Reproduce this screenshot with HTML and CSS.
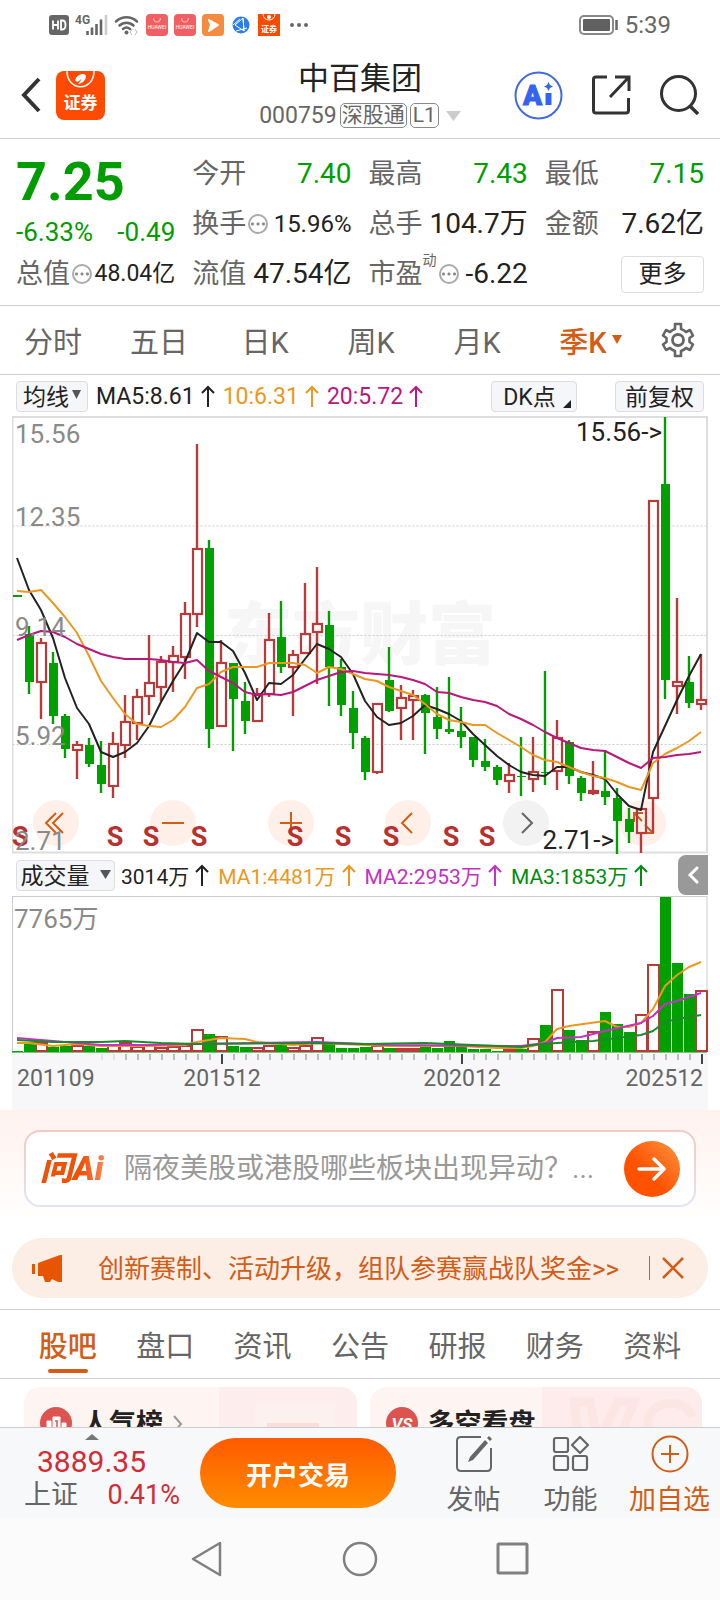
FILE: index.html
```html
<!DOCTYPE html>
<html lang="zh-CN">
<head>
<meta charset="utf-8">
<meta name="viewport" content="width=device-width, initial-scale=1">
<title>中百集团 000759</title>
<link rel="stylesheet" href="styles.css">
</head>
<body>
<div class="app">
  <div class="status">
    <div class="status-left">
      <svg width="20" height="20" viewBox="0 0 20 20"><rect width="20" height="20" rx="3" fill="#666"/><path d="M4 5.500v9M9 5.500v9M4 10h5M12 5.500v9h1.500c2 0 3-1.500 3-4.500s-1-4.500-3-4.500z" fill="none" stroke="#fff" stroke-width="1.800"/></svg>
      <span class="net">4G</span>
      <svg class="signal" width="22" height="20" viewBox="0 0 22 20"><path d="M1.500 16v4M6 12.500V20M10.500 9v11M15 4.500V20" stroke="#666" stroke-width="2.600"/><path d="M20 0v20" stroke="#ccc" stroke-width="2.600"/></svg>
      <svg width="26" height="20" viewBox="0 0 26 20"><g fill="none" stroke="#666" stroke-width="2.500" stroke-linecap="round"><path d="M2 6.500a15 15 0 0 1 21 0M5.500 10.500a10 10 0 0 1 14 0M9 14a5.500 5.500 0 0 1 7 0"/></g><circle cx="12.500" cy="17.500" r="2" fill="#666"/><path d="M18 14l-2 3 2 3M21 14l2 3-2 3" fill="none" stroke="#bbb"/></svg>
      <svg width="22" height="22" viewBox="0 0 22 22"><rect width="22" height="22" rx="4" fill="#f15f62"/><path d="M7.500 4a3.500 4 0 0 0 7 0" fill="none" stroke="#fbb" stroke-width="1.200"/><text x="11" y="14.500" text-anchor="middle" class="tiny">HUAWEI</text></svg>
      <svg width="22" height="22" viewBox="0 0 22 22"><rect width="22" height="22" rx="4" fill="#f15f62"/><path d="M7.500 4a3.500 4 0 0 0 7 0" fill="none" stroke="#fbb" stroke-width="1.200"/><text x="11" y="14.500" text-anchor="middle" class="tiny">HUAWEI</text></svg>
      <svg width="22" height="22" viewBox="0 0 22 22"><rect width="22" height="22" rx="4" fill="#f58b3f"/><path d="M7 6l9 5-9 6 2-6z" fill="#fff" stroke="#fff" stroke-width="2" stroke-linejoin="round"/></svg>
      <svg class="globe" width="18" height="18" viewBox="0 0 18 18"><circle cx="9" cy="9" r="8.500" fill="#2b7de9"/><path d="M11 2L3 9l9 6zM11 2l1 13M1 9l7-6M4 15l11-3" fill="none" stroke="#fff" stroke-width="1"/></svg>
      <svg class="sec" width="22" height="22" viewBox="0 0 22 22"><rect width="22" height="22" fill="#fa4a00"/><path d="M5 0c0 8 12 8 12 0" fill="none" stroke="#fff"/><circle cx="11" cy="3" r="2" fill="#fff"/><text x="11" y="18" text-anchor="middle" class="tiny-cn">证券</text></svg>
      <svg class="dots" width="18" height="4" viewBox="0 0 18 4"><circle cx="2" cy="2" r="2" fill="#666"/><circle cx="9" cy="2" r="2" fill="#666"/><circle cx="16" cy="2" r="2" fill="#666"/></svg>
    </div>
    <div class="status-right">
      <svg width="39" height="20" viewBox="0 0 39 20"><rect x="1" y="1" width="33" height="18" rx="4" fill="none" stroke="#888" stroke-width="2"/><rect x="4" y="4" width="27" height="12" rx="1" fill="#606060"/><path d="M37.500 5v10" stroke="#666" stroke-width="2.500"/></svg>
      <span>5:39</span>
    </div>
  </div>

  <header class="header">
    <div class="head-side">
      <button aria-label="返回"><svg width="22" height="36" viewBox="0 0 22 36"><path d="M19 2L4 18l15 16" fill="none" stroke="#333" stroke-width="4"/></svg></button>
      <button aria-label="证券"><svg width="49" height="49" viewBox="0 0 49 49"><rect width="49" height="49" rx="8" fill="#fe4a02"/><path d="M11 0c0 21 27 21 27 0" fill="none" stroke="#fff" stroke-width="1.500"/><path d="M19 9c2-6 10-8 11-4 0 4-4 8-8 8 2-2 3-4 3-5-1 1-3 3-4 3z" fill="#fff"/><text x="24.500" y="38" text-anchor="middle" class="logo-cn">证券</text></svg></button>
    </div>
    <div class="title">
      <h1>中百集团</h1>
      <div class="code"><span>000759</span><span class="tag">深股通</span><span class="tag tag-l">L1</span><svg width="15" height="10" viewBox="0 0 15 10"><path d="M0 0h15L7.500 10z" fill="#ccc"/></svg></div>
    </div>
    <div class="head-side head-right">
      <button aria-label="Ai"><svg width="49" height="49" viewBox="0 0 49 49"><circle cx="24.500" cy="24.500" r="23" fill="#fff" stroke="#4169e1" stroke-width="2"/><text x="9" y="34" class="ai-text">A</text><path d="M34.500 22v12" stroke="#3563ee" stroke-width="6"/><path d="M34.500 11l1.500 3 3 1.500-3 1.500-1.500 3-1.500-3-3-1.500 3-1.500z" fill="#3563ee"/></svg></button>
      <button aria-label="分享"><svg width="39" height="40" viewBox="0 0 39 40"><path d="M15 2H4q-2.500 0-2.500 2.500v31q0 2.500 2.500 2.500h30q2.500 0 2.500-2.500V23M23 2h14v14M37 2L18 22" fill="none" stroke="#333" stroke-width="3"/></svg></button>
      <button aria-label="搜索"><svg width="40" height="40" viewBox="0 0 40 40"><circle cx="18.500" cy="18.500" r="17" fill="none" stroke="#333" stroke-width="3"/><path d="M30 31l8 8" stroke="#333" stroke-width="3.500"/></svg></button>
    </div>
  </header>

  <main class="main">
    <section class="quote">
      <div class="col">
        <div class="price">7.25</div>
        <div class="change"><span>-6.33%</span><span>-0.49</span></div>
        <div class="cell"><span class="k">总值</span><i class="info"></i><b class="s">48.04亿</b></div>
      </div>
      <div class="col">
        <div class="cell"><span class="k">今开</span><b class="g">7.40</b></div>
        <div class="cell"><span class="k">换手</span><i class="info"></i><b class="m">15.96%</b></div>
        <div class="cell"><span class="k">流值</span><b>47.54亿</b></div>
      </div>
      <div class="col">
        <div class="cell"><span class="k">最高</span><b class="g">7.43</b></div>
        <div class="cell"><span class="k">总手</span><b>104.7万</b></div>
        <div class="cell"><span class="k">市盈</span><sup>动</sup><i class="info"></i><b>-6.22</b></div>
      </div>
      <div class="col">
        <div class="cell"><span class="k">最低</span><b class="g">7.15</b></div>
        <div class="cell"><span class="k">金额</span><b>7.62亿</b></div>
        <div class="cell"><button class="more">更多</button></div>
      </div>
    </section>

    <nav class="periods">
      <button>分时</button><button>五日</button><button>日K</button><button>周K</button><button>月K</button>
      <button class="on">季K<svg width="10" height="10" viewBox="0 0 10 10"><path d="M0 0h10L5 9z" fill="#d35c16"/></svg></button>
      <button class="gear" aria-label="设置"><svg width="36" height="36" viewBox="0 0 36 36"><path d="M15 2h6v5q3 1 5 3l4-2 3 5.500-3.500 2.500v4l3.500 2.500-3 5.500-4-2q-2 2-5 3v5h-6v-5q-3-1-5-3l-4 2-3-5.500 3.500-2.500v-4L3 13.500 6 8l4 2q2-2 5-3z" fill="none" stroke="#666" stroke-width="2.600" stroke-linejoin="round"/><circle cx="18" cy="18" r="5.500" fill="none" stroke="#666" stroke-width="2.800"/></svg></button>
    </nav>

    <div class="ind">
      <button class="chip">均线<svg width="9" height="9" viewBox="0 0 9 9"><path d="M0 0h9L4.500 9z" fill="#555"/></svg></button>
      <span class="ma">MA5:8.61<svg class="up" viewBox="0 0 14 22"><path d="M7 22V2M1 8l6-6 6 6"/></svg></span>
      <span class="ma or">10:6.31<svg class="up" viewBox="0 0 14 22"><path d="M7 22V2M1 8l6-6 6 6"/></svg></span>
      <span class="ma pk">20:5.72<svg class="up" viewBox="0 0 14 22"><path d="M7 22V2M1 8l6-6 6 6"/></svg></span>
      <button class="chip dk">DK点<svg width="8" height="8" viewBox="0 0 8 8"><path d="M8 0v8H0z" fill="#222"/></svg></button>
      <button class="chip adj">前复权</button>
    </div>

    <div class="chart">
      <div class="tools">
        <button aria-label="最早"><svg viewBox="0 0 46 46"><path d="M23 13L13 23l10 10M30 13L20 23l10 10"/></svg></button>
        <button aria-label="缩小"><svg viewBox="0 0 46 46"><path d="M12 23h22"/></svg></button>
        <button aria-label="放大"><svg viewBox="0 0 46 46"><path d="M12 23h22M23 12v22"/></svg></button>
        <button aria-label="左移"><svg viewBox="0 0 46 46"><path d="M27 13L17 23l10 10"/></svg></button>
        <button aria-label="右移" class="grey"><svg viewBox="0 0 46 46"><path d="M19 13l10 10-10 10"/></svg></button>
        <button aria-label="全屏"><svg viewBox="0 0 46 46"><path d="M14 22v-9h9M14 13l8 8M33 24v9h-9M33 33l-8-8"/></svg></button>
      </div>
      <svg id="kline" viewBox="12 416 696 438" role="img" aria-label="季K线图">
        <text x="224" y="659" class="mark">东方财富</text>
        <path d="M12.500 526H707M12.500 635.500H707M12.500 744.500H707" class="grid"/>
        <rect x="12.500" y="417" width="694.500" height="435.500" class="frame"/>
      </svg>
    </div>

    <div class="vol-row">
      <button class="chip wide">成交量<svg width="11" height="9" viewBox="0 0 11 9"><path d="M0 0h11L5.500 9z" fill="#555"/></svg></button>
      <span class="ma">3014万<svg class="up" viewBox="0 0 14 22"><path d="M7 22V2M1 8l6-6 6 6"/></svg></span>
      <span class="ma or">MA1:4481万<svg class="up" viewBox="0 0 14 22"><path d="M7 22V2M1 8l6-6 6 6"/></svg></span>
      <span class="ma pu">MA2:2953万<svg class="up" viewBox="0 0 14 22"><path d="M7 22V2M1 8l6-6 6 6"/></svg></span>
      <span class="ma gr">MA3:1853万<svg class="up" viewBox="0 0 14 22"><path d="M7 22V2M1 8l6-6 6 6"/></svg></span>
      <button class="fold" aria-label="收起"><svg width="12" height="18" viewBox="0 0 12 18"><path d="M10 2L3 9l7 7" fill="none" stroke="#fff" stroke-width="3" stroke-linecap="round"/></svg></button>
    </div>

    <div class="chart">
      <svg id="volume" viewBox="12 896 696 158" role="img" aria-label="成交量">
        <text x="14" y="928" class="axis">7765万</text>
        <rect x="12.500" y="896.500" width="694.500" height="155.500" class="frame vf"/>
      </svg>
      <svg id="ticks" class="dates" viewBox="12 1054 696 56" role="img" aria-label="日期">
        <text x="17" y="1086" class="date">201109</text>
        <text x="222" y="1086" class="date" text-anchor="middle">201512</text>
        <text x="462" y="1086" class="date" text-anchor="middle">202012</text>
        <text x="703" y="1086" class="date" text-anchor="end">202512</text>
      </svg>
    </div>

    <section class="ask">
      <form class="ask-box" onsubmit="return false">
        <span class="ask-logo"><span>问Ai</span></span>
        <input type="text" aria-label="问Ai" placeholder="隔夜美股或港股哪些板块出现异动？...">
        <button aria-label="发送"><svg width="30" height="26" viewBox="0 0 30 26"><path d="M2 13h25M17 3l10 10-10 10" fill="none" stroke="#fff" stroke-width="3.500" stroke-linecap="round" stroke-linejoin="round"/></svg></button>
      </form>
    </section>

    <div class="banner">
      <svg width="30" height="28" viewBox="0 0 30 28"><path d="M1.500 10v10" stroke="#e85502" stroke-width="3"/><path d="M6 9L28 1h2v27h-4l-6-3-2 3h-5l-2-6H6z" fill="#e85502"/></svg>
      <a href="#">创新赛制、活动升级，组队参赛赢战队奖金&gt;&gt;</a>
      <button aria-label="关闭"><svg width="22" height="22" viewBox="0 0 22 22"><path d="M1 1l20 20M21 1L1 21" stroke="#d35c16" stroke-width="2.500"/></svg></button>
    </div>

    <nav class="tabs">
      <button class="on">股吧</button><button>盘口</button><button>资讯</button><button>公告</button><button>研报</button><button>财务</button><button>资料</button>
    </nav>

    <section class="cards">
      <a href="#" class="card">
        <svg class="art" width="138" height="90" viewBox="0 0 138 90"><path d="M0 0h138v90H0z" fill="#fdeeed"/><path d="M36 16h80v74H36z" fill="#fdf1f0"/><path d="M48 36h52v8H48z" fill="#fbdedc"/></svg>
        <svg width="32" height="32" viewBox="0 0 32 32"><circle cx="16" cy="16" r="16" fill="#dd5350"/><path d="M7 26V14h4v12M13 26V10h7v16M22 26V16h4v10" fill="#fff" stroke="#fff"/><path d="M15 14h2v9" fill="none" stroke="#dd5350" stroke-width="1.500"/></svg>
        <span>人气榜</span>
        <svg class="next" width="10" height="18" viewBox="0 0 10 18"><path d="M1 1l7 8-7 8" fill="none" stroke="#999" stroke-width="2"/></svg>
      </a>
      <a href="#" class="card">
        <svg class="art" width="160" height="90" viewBox="0 0 160 90"><path d="M0 0h160v90H0z" fill="#fdeceb"/><path d="M32 15h16l8 40 20-40h16L62 90H42zM150 30c-5-20-44-18-44 6 0 20 38 18 28 34" fill="none" stroke="#fce6e4" stroke-width="9"/></svg>
        <svg width="32" height="32" viewBox="0 0 32 32"><circle cx="16" cy="16" r="16" fill="#dd5350"/><text x="16" y="23" text-anchor="middle" class="vs">VS</text></svg>
        <span>多空看盘</span>
      </a>
    </section>
  </main>

  <footer class="bar">
    <button class="index">
      <svg width="14" height="6" viewBox="0 0 14 6"><path d="M0 6h14L7 0z" fill="#777"/></svg>
      <span class="idx">3889.35</span>
      <span class="idx2"><em>上证</em><span>0.41%</span></span>
    </button>
    <button class="trade">开户交易</button>
    <button class="act"><svg width="38" height="38" viewBox="0 0 38 38"><path d="M26 2H6q-4 0-4 4v26q0 4 4 4h26q4 0 4-4V13" fill="none" stroke="#666" stroke-width="2"/><path d="M15 22L30 5l3 3-15 17-5 2z" fill="#666"/><path d="M32 3l2-2 3 3-2 2z" fill="#666"/></svg>发帖</button>
    <button class="act"><svg width="38" height="38" viewBox="0 0 38 38"><g fill="none" stroke="#666" stroke-width="2.200"><rect x="2" y="3" width="14" height="14" rx="2"/><rect x="2" y="21" width="14" height="14" rx="2"/><rect x="21" y="21" width="14" height="14" rx="2"/><path d="M28 2l8 8-8 8-8-8z" stroke-linejoin="round"/></g></svg>功能</button>
    <button class="act on"><svg width="38" height="38" viewBox="0 0 38 38"><circle cx="19" cy="19" r="17.500" fill="none" stroke="#d35c16" stroke-width="2"/><path d="M10 19h18M19 10v18" stroke="#d35c16" stroke-width="2"/></svg>加自选</button>
  </footer>

  <div class="sysnav">
    <button aria-label="返回"><svg width="34" height="36" viewBox="0 0 34 36"><path d="M30 2v32L3 18z" fill="none" stroke="#808080" stroke-width="2.500" stroke-linejoin="round"/></svg></button>
    <button aria-label="主页"><svg width="36" height="36" viewBox="0 0 36 36"><circle cx="18" cy="18" r="16" fill="none" stroke="#808080" stroke-width="2.500"/></svg></button>
    <button aria-label="多任务"><svg width="34" height="34" viewBox="0 0 34 34"><rect x="2" y="2" width="29" height="29" rx="1" fill="none" stroke="#808080" stroke-width="3"/></svg></button>
  </div>
</div>
<script src="chart.js"></script>
</body>
</html>
```

FILE: styles.css
```css
* { box-sizing: border-box; }
body { margin: 0; background: #fff; color: #222; font-family: Roboto, "Noto Sans CJK SC", sans-serif; }
button { border: 0; padding: 0; margin: 0; background: none; font: inherit; color: inherit; display: flex; align-items: center; justify-content: center; }
a { color: inherit; text-decoration: none; }
svg { display: block; flex: none; }
.app { height: 100vh; display: flex; flex-direction: column; overflow: hidden; }

.status { flex: none; height: 48px; padding: 2px 49px 0; display: flex; justify-content: space-between; align-items: center; color: #666; }
.status-left { display: flex; align-items: center; gap: 6px; }
.net { font-size: 12px; line-height: 12px; font-weight: 700; align-self: flex-start; margin-right: -10px; }
.globe { margin: 0 2px; }
.dots { margin-left: 4px; }
.tiny { font-size: 5px; fill: #fff; }
.tiny-cn { font-size: 8px; font-weight: 700; fill: #fff; }
.status-right { display: flex; align-items: center; gap: 7px; font-size: 24px; }

.header { flex: none; height: 91px; border-bottom: 1px solid #ccc; padding: 4px 20px 0; display: grid; grid-template-columns: 1fr auto 1fr; align-items: center; }
.head-side { display: flex; align-items: center; gap: 14px; }
.head-right { justify-content: flex-end; gap: 29px; }
.title { display: flex; flex-direction: column; align-items: center; }
.title h1 { margin: 0; font-size: 31px; line-height: 41px; font-weight: 400; }
.code { display: flex; align-items: center; gap: 3px; font-size: 23px; line-height: 34px; color: #666; }
.code svg { margin-left: 4px; }
.tag { font-size: 21px; line-height: 23px; border: 1px solid #888; border-radius: 5px; padding: 0 1px; }
.tag-l { padding: 0 2px; }
.logo-cn { font-size: 17px; font-weight: 700; fill: #fff; }
.ai-text { font-size: 28px; font-weight: 900; fill: #3563ee; stroke: #3563ee; }

.main { flex: 1; min-height: 0; overflow: hidden; display: flex; flex-direction: column; }
.main > * { flex: none; }
.quote { height: 167px; padding: 10px 16px 0; display: grid; grid-template-columns: repeat(4, 1fr); gap: 17px; border-bottom: 1px solid #ccc; }
.col { min-width: 0; }
.price { font-size: 54px; line-height: 66px; font-weight: 700; color: #009c00; }
.change { height: 34px; display: flex; justify-content: space-between; align-items: center; font-size: 26px; color: #009c00; }
.cell { height: 50px; display: flex; align-items: center; font-size: 28px; line-height: 40px; white-space: nowrap; }
.cell b { margin-left: auto; font-weight: 400; }
.cell .m { font-size: 24px; }
.cell .s { font-size: 23px; }
.k { color: #666; font-size: 27px; }
.g { color: #009c00; }
.cell sup { font-size: 14px; line-height: 14px; align-self: flex-start; margin-top: 4px; color: #666; }
.info { width: 20px; height: 20px; margin-left: 2px; border: 2px solid #aaa; border-radius: 50%; background: radial-gradient(circle, #888 1px, transparent 2px) 0 0 / 5px 16px no-repeat, radial-gradient(circle, #888 1px, transparent 2px) 5px 0 / 6px 16px no-repeat, radial-gradient(circle, #888 1px, transparent 2px) 11px 0 / 5px 16px no-repeat; }
.more { margin-left: auto; width: 83px; height: 37px; border: 1px solid #ddd; border-radius: 4px; font-size: 24px; }

.periods { height: 69px; display: flex; border-bottom: 1px solid #ccc; font-size: 29px; color: #666; }
.periods button { flex: 1; }
.periods .on { color: #d35c16; font-weight: 500; }
.periods .on svg { margin: 0 -15px 0 5px; }
.periods .gear { flex: none; width: 84px; }

.ind, .vol-row { display: flex; align-items: center; padding-left: 16px; }
.ind { height: 41px; padding-right: 16px; gap: 8px; font-size: 23px; padding-top: 1px; }
.vol-row { height: 42px; padding-right: 12px; gap: 9px; font-size: 21px; }
.chip { height: 31px; padding: 0 6px 3px; gap: 3px; background: #f5f6fa; border: 1px solid #ddd; border-radius: 4px; font-size: 23px; }
.chip.wide { width: 99px; gap: 10px; padding: 0 3px 2px; margin-right: -3px; }
.chip.dk { margin-left: auto; margin-right: 30px; width: 86px; gap: 7px; padding: 0 0 3px 6px; }
.chip.dk svg { align-self: flex-end; }
.chip.adj { padding: 0 9px 3px; }
.ma { display: flex; align-items: center; gap: 6px; white-space: nowrap; }
.up { width: 14px; height: 22px; fill: none; stroke: currentColor; stroke-width: 2; }
.or { color: #eb9820; }
.pk { color: #b9187c; }
.pu { color: #c431c4; }
.gr { color: #008c10; }
.fold { margin-left: auto; width: 30px; height: 40px; background: #999; border-radius: 8px 0 0 8px; }

.chart { position: relative; margin: 0 12px; }
.chart > svg { position: relative; width: 100%; height: auto; pointer-events: none; }
.frame { fill: none; stroke: #ddd; stroke-width: 2; }
.vf { stroke: #ccc; stroke-width: 1; }
.grid { fill: none; stroke: #ccc; stroke-width: 1; stroke-dasharray: 2 2; }
.mark { font-size: 68px; font-weight: 900; fill: #f6f6f6; }
.axis { font-size: 26px; fill: #8a8a8a; }
.date { font-size: 23px; fill: #666; }
.note { font-size: 26px; fill: #222; }
.sell { font-size: 27px; font-weight: 700; fill: #b93030; text-anchor: middle; }
.tools { position: absolute; left: 3%; right: 6%; bottom: 8px; display: flex; justify-content: space-between; }
.tools button { width: 46px; height: 46px; border-radius: 50%; background: #fef0e9; }
.tools svg { width: 46px; height: 46px; fill: none; stroke: #d35c16; stroke-width: 2; }
.tools .grey { background: #f2f2f3; }
.tools .grey svg { stroke: #666; }
.dates { background: #f7f7fa; }

.ask { padding: 20px 24px 19px; background: linear-gradient(#fff2ee, #fff); }
.ask-box { height: 77px; display: flex; align-items: center; padding: 0 14px; border: 2px solid transparent; border-radius: 16px; background: linear-gradient(#fff, #fff) padding-box, linear-gradient(#f5c8c2, #dfe5f3) border-box; }
.ask-logo { flex: none; width: 84px; font-size: 33px; line-height: 40px; font-weight: 900; font-style: italic; }
.ask-logo span { color: transparent; background: linear-gradient(90deg, #ee5208 60%, #ff8a5c); background-clip: text; -webkit-background-clip: text; padding-right: 4px; }
.ask input { flex: 1; min-width: 0; border: 0; outline: 0; padding: 0; background: none; font: inherit; font-size: 28px; height: 44px; }
.ask input::placeholder { color: #999; opacity: 1; }
.ask button { flex: none; width: 56px; height: 56px; border-radius: 50%; background: linear-gradient(225deg, #ff9440, #ff5200 60%); }

.banner { margin: 12px 12px 11px; height: 60px; border-radius: 30px; background: #fdeee5; display: flex; align-items: center; padding: 0 24px 0 20px; color: #d35c16; }
.banner a { margin-left: 36px; flex: 1; font-size: 26px; padding-bottom: 3px; white-space: nowrap; }
.banner button { height: 24px; border-left: 1px solid #d35c16; padding-left: 12px; }

.tabs { height: 70px; border-top: 1px solid #ccc; border-bottom: 1px solid #ccc; padding: 0 19px; display: flex; font-size: 29px; color: #666; }
.tabs button { flex: 1; position: relative; }
.tabs .on { color: #d35c16; font-weight: 500; }
.tabs .on::after { content: ""; position: absolute; left: 50%; margin-left: -20px; bottom: 5px; width: 40px; height: 4px; border-radius: 2px; background: #d35c16; }

.cards { padding: 8px 18px 0 24px; display: grid; grid-template-columns: 1fr 1fr; gap: 13px; }
.card { position: relative; height: 90px; border-radius: 16px; overflow: hidden; background: #fef5f3; display: flex; align-items: flex-start; gap: 10px; padding: 20px 16px; font-size: 27px; line-height: 34px; font-weight: 700; }
.card > * { position: relative; }
.card .next { margin-top: 8px; }
.card .art { position: absolute; top: 0; right: 0; }
.vs { font-size: 17px; font-weight: 700; font-style: italic; fill: #fff; }

.bar { flex: none; height: 91px; background: #f7f8fa; border-top: 1px solid #ccc; display: flex; align-items: flex-start; padding-left: 24px; color: #666; }
.index { width: 156px; flex-direction: column; padding-top: 6px; color: #d22c36; }
.index > svg { margin-right: 20px; }
.idx { font-size: 30px; line-height: 36px; align-self: flex-start; margin-left: 13px; padding-top: 4px; }
.idx2 { width: 100%; display: flex; justify-content: space-between; font-size: 27px; line-height: 30px; }
.idx2 em { font-style: normal; color: #666; }
.trade { flex: 1; height: 70px; margin: 10px 29px 0 20px; border-radius: 35px; background: linear-gradient(#ff5a00, #ff8c00); color: #fff; font-size: 26px; font-weight: 700; }
.act { width: 97px; flex-direction: column; font-size: 27px; line-height: 36px; padding-top: 7px; gap: 9px; }
.act.on { color: #d35c16; width: 101px; }

.sysnav { flex: none; height: 82px; background: #fbfbfb; display: flex; justify-content: center; align-items: center; gap: 118px; }
```

FILE: chart.js
```js
const NS = 'http://www.w3.org/2000/svg';
const RED = '#b93a3a', GREEN = '#00a000';
const X0 = 17, STEP = 12;
const xAt = i => X0 + STEP * i;

function add(svg, tag, attrs, text) {
  const el = document.createElementNS(NS, tag);
  for (const k in attrs) el.setAttribute(k, attrs[k]);
  if (text) el.textContent = text;
  svg.appendChild(el);
}

// direction, wick top, body top, body bottom, wick bottom
const candles = [
  ['g',595,595,597,597],['g',626,634,682,694],['r',638,643,682,719],['g',652,663,716,724],['g',714,716,749,758],
  ['r',741,745,750,779],['g',738,745,764,767],['g',741,765,784,793],['r',732,744,786,798],['r',695,722,745,758],
  ['r',689,697,723,740],['r',635,683,696,715],['r',656,662,687,701],['r',646,656,662,692],['r',602,614,657,679],
  ['r',444,549,614,627],['g',540,548,729,748],['r',640,663,726,726],['g',663,663,699,751],['g',682,701,721,734],
  ['r',688,694,721,721],['r',613,640,694,697],['g',601,637,667,673],['r',650,655,667,716],['r',583,634,653,653],
  ['r',567,624,632,684],['g',611,625,667,706],['g',659,667,705,716],['g',691,708,733,749],['g',736,738,772,780],
  ['r',704,704,772,774],['g',647,680,711,712],['r',685,698,708,740],['r',690,696,700,740],['g',694,695,713,754],
  ['g',687,717,729,739],['g',677,729,732,734],['g',707,731,737,748],['g',737,737,760,767],['g',739,761,767,771],
  ['g',765,767,780,785],['r',763,775,781,793],['g',737,776,777,796],['r',737,772,779,792],['g',671,772,773,785],
  ['r',720,738,771,790],['g',740,742,776,784],['g',776,778,793,801],['r',761,791,793,795],['g',750,791,797,805],
  ['g',788,798,821,854],['g',808,819,832,843],['r',808,809,833,853],['r',501,501,798,833],['g',417,484,680,699],
  ['r',598,682,686,714],['g',656,682,703,708],['r',654,700,704,710]
];

const k = document.getElementById('kline');
candles.forEach(([d, wt, bt, bb, wb], i) => {
  const x = xAt(i), c = d === 'g' ? GREEN : RED;
  if (wt < bt) add(k, 'path', { d: `M${x} ${wt}V${bt}`, stroke: c, 'stroke-width': 2.4 });
  if (wb > bb) add(k, 'path', { d: `M${x} ${bb}V${wb}`, stroke: c, 'stroke-width': 2.4 });
  if (d === 'g') add(k, 'rect', { x: x - 4, y: bt, width: 9, height: bb - bt, fill: c });
  else add(k, 'rect', { x: x - 4, y: bt, width: 9, height: bb - bt, fill: 'none', stroke: c, 'stroke-width': 2.2 });
});

const line = (svg, pts, color, w) => add(svg, 'polyline', { points: pts, fill: 'none', stroke: color, 'stroke-width': w, 'stroke-linejoin': 'round' });
const series = ys => ys.map((y, i) => `${xAt(i)},${y}`).join(' ');

line(k, series([558,590,610,638,678,708,724,752,757,752,743,726,702,681,662,633,642,642,651,673,700,683,684,675,659,644,649,657,674,701,717,725,723,716,705,709,714,721,734,745,756,765,772,775,776,767,767,772,775,779,794,806,810,752,726,700,676,654]), '#222', 2);
line(k, series([591,592,590,603,617,633,656,681,698,714,724,726,727,720,707,688,684,672,667,667,667,663,663,663,665,673,667,669,674,679,681,687,691,695,704,714,720,722,725,725,733,740,747,755,760,762,767,772,776,778,782,787,790,763,754,748,741,732]), '#eb9820', 2);
line(k, series([640,635,631,632,637,644,649,654,657,659,659,659,660,662,663,660,671,677,683,692,695,694,695,692,686,680,676,672,671,673,674,675,677,680,684,692,693,697,700,702,706,714,719,725,732,738,743,748,750,751,757,763,768,758,757,755,754,752]), '#b9187c', 2);

[20, 115, 151, 199, 295, 343, 391, 451, 487].forEach(x => add(k, 'text', { x, y: 846, class: 'sell' }, 'S'));
[['15.56', 443], ['12.35', 526], ['9.14', 636], ['5.92', 745], ['2.71', 850]].forEach(([t, y]) => add(k, 'text', { x: 15, y, class: 'axis' }, t));
add(k, 'text', { x: 662, y: 441, class: 'note', 'text-anchor': 'end' }, '15.56->');
add(k, 'text', { x: 614, y: 849, class: 'note', 'text-anchor': 'end' }, '2.71->');

// bar tops, one per quarter
const vols = [1051,1042,1043,1047,1046,1046,1046,1048,1046,1043,1047,1045,1048,1047,1046,1030,1034,1037,1046,1047,1048,1046,1045,1048,1046,1038,1042,1048,1048,1047,1046,1048,1049,1049,1047,1048,1041,1047,1049,1049,1051,1049,1049,1039,1025,990,1030,1040,1032,1012,1024,1032,1015,965,897,963,994,991];
const FALLING_VOLUME = 55;
const v = document.getElementById('volume');
vols.forEach((top, i) => {
  const x = xAt(i), r = candles[i][0] === 'r' && i !== FALLING_VOLUME;
  if (r) add(v, 'rect', { x: x - 5, y: top, width: 11, height: Math.max(1051 - top, 1), fill: '#fff', stroke: RED, 'stroke-width': 2 });
  else add(v, 'rect', { x: x - 5, y: top, width: 11, height: 1052 - top, fill: GREEN });
});
line(v, '17,1043 29,1043 53,1046 77,1044 101,1046 149,1046 185,1045 197,1042 221,1038 245,1039 257,1042 293,1045 317,1043 341,1044 389,1046 461,1046 497,1048 521,1048 533,1046 545,1042 557,1029 569,1026 605,1021 617,1027 629,1027 641,1023 653,1009 665,986 677,975 689,967 701,962', '#eb9820', 2);
line(v, '17,1038 41,1040 65,1042 101,1045 149,1045 185,1044 317,1042 365,1044 389,1045 521,1046 545,1043 557,1038 581,1037 605,1031 641,1023 653,1016 665,1004 677,1001 701,993', '#c431c4', 2);
line(v, '17,1040 53,1042 101,1042 125,1041 161,1043 197,1044 317,1043 365,1044 425,1043 497,1046 521,1047 533,1045 557,1043 593,1041 617,1038 641,1035 653,1031 665,1022 677,1019 689,1017 701,1015', '#1c8a2c', 2);
add(v, 'path', { d: 'M12 1052.500H707', stroke: '#7fbf7f', 'stroke-width': 1 });

const t = document.getElementById('ticks');
for (let i = 7; i < 58; i++) {
  const major = i === 17 || i === 37 || i === 57;
  add(t, 'path', { d: `M${xAt(i) + 1} 1054v${major ? 10 : 6}`, stroke: major ? '#444' : i < 9 ? '#ddd' : '#aaa', 'stroke-width': major ? 2 : 1.5 });
}
```
